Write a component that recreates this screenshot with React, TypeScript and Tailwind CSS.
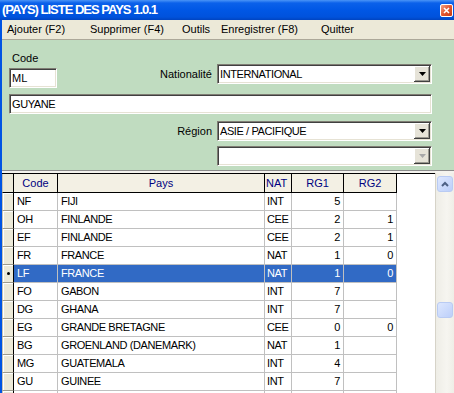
const rows: [string, string, string, string, string][] = [
  ["NF", "FIJI", "INT", "5", ""],
  ["OH", "FINLANDE", "CEE", "2", "1"],
  ["EF", "FINLANDE", "CEE", "2", "1"],
  ["FR", "FRANCE", "NAT", "1", "0"],
  ["LF", "FRANCE", "NAT", "1", "0"],
  ["FO", "GABON", "INT", "7", ""],
  ["DG", "GHANA", "INT", "7", ""],
  ["EG", "GRANDE BRETAGNE", "CEE", "0", "0"],
  ["BG", "GROENLAND (DANEMARK)", "NAT", "1", ""],
  ["MG", "GUATEMALA", "INT", "4", ""],
  ["GU", "GUINEE", "INT", "7", ""],
  ["", "", "", "", ""],
];

const SELECTED = 4;

const sunken =
  "h-[20px] bg-white border border-t-[#7f7d74] border-l-[#7f7d74] border-b-white border-r-white shadow-[inset_1px_1px_0_#404040,inset_-1px_-1px_0_#e6e2d4] flex items-center";

function Combo({ value, disabled }: { value: string; disabled?: boolean }) {
  return (
    <div className={`${sunken} w-[215px] pl-[2px]`}>
      <span className="tracking-[-0.4px]">{value}</span>
      <div className="ml-auto mr-[1px] w-[16px] h-[16px] bg-[#e6e3d8] shadow-[inset_-1px_-1px_0_#404040,inset_1px_1px_0_#ffffff,inset_-2px_-2px_0_#9a9890] flex items-center justify-center">
        <svg width="7" height="4" viewBox="0 0 7 4">
          <path d="M0 0H7L3.5 4Z" fill={disabled ? "#a8a8a8" : "#000"} />
        </svg>
      </div>
    </div>
  );
}

function ScrollButton({ arrow }: { arrow?: boolean }) {
  return (
    <div className="w-[16px] h-[16px] rounded-[3px] border border-[#b9cbf3] bg-[linear-gradient(to_bottom_right,#dde7fe,#bccffa)] flex items-center justify-center">
      {arrow && (
        <svg width="8" height="6" viewBox="0 0 8 6">
          <path d="M1 5L4 2L7 5" fill="none" stroke="#4d6185" strokeWidth="2" />
        </svg>
      )}
    </div>
  );
}

export default function App() {
  return (
    <div className="w-[454px] h-[393px] overflow-hidden flex flex-col bg-white font-['Liberation_Sans',Arial,sans-serif] text-[11px] text-black">
      {/* title bar */}
      <div className="h-[20px] shrink-0 flex items-center pl-[2px] pr-[1px] bg-[linear-gradient(to_bottom,#4a94f7_0%,#0b61ea_15%,#0057e5_50%,#0052dc_85%,#0044c0_100%)]">
        <span className="text-white font-bold text-[13px] tracking-[-1px]">(PAYS) LISTE DES PAYS 1.0.1</span>
        <div className="ml-auto w-[13px] h-[13px] rounded-[2px] border border-white bg-[linear-gradient(135deg,#f3a487,#e2552f_50%,#c63a14)] flex items-center justify-center">
          <svg width="7" height="7" viewBox="0 0 7 7">
            <path d="M1 1L6 6M6 1L1 6" stroke="#fff" strokeWidth="1.6" />
          </svg>
        </div>
      </div>

      <div className="flex-1 min-h-0 flex flex-col border-l-2 border-[#0054e3]">
        {/* menu */}
        <div className="h-[20px] shrink-0 flex items-center pl-[5px] bg-[#ece9d8] border-b border-[#aca899]">
          <span className="w-[83px]">Ajouter (F2)</span>
          <span className="w-[92px]">Supprimer (F4)</span>
          <span className="w-[39px]">Outils</span>
          <span className="w-[100px]">Enregistrer (F8)</span>
          <span>Quitter</span>
        </div>

        {/* form */}
        <div className="h-[131px] shrink-0 bg-[#c0dcc0] border-b border-[#8c8c8c] pl-[7px] pr-[22px] flex flex-col">
          <div className="flex items-start">
            <div className="flex flex-col mt-[11px]">
              <span className="leading-[14px] pl-[3px]">Code</span>
              <div className={`${sunken} w-[48px] mt-[3px] pl-[2px]`}>ML</div>
            </div>
            <div className="ml-auto mt-[24px] flex items-center">
              <span className="mr-[5px]">Nationalité</span>
              <Combo value="INTERNATIONAL" />
            </div>
          </div>
          <div className={`${sunken} mt-[6px] pl-[2px]`}>
            <span className="tracking-[-0.4px]">GUYANE</span>
          </div>
          <div className="mt-[7px] flex items-center justify-end">
            <span className="mr-[5px]">Région</span>
            <Combo value="ASIE / PACIFIQUE" />
          </div>
          <div className="mt-[5px] flex justify-end">
            <Combo value="" disabled />
          </div>
        </div>
        <div className="h-[2px] shrink-0 bg-[#f4f3ee]" />

        {/* grid */}
        <div className="flex-1 min-h-0 flex">
          <div className="w-[433px] border-t border-black overflow-hidden">
            <div className="flex h-[19px] text-[#000080]">
              <div className="w-[12px] bg-[#ece9d8] border-l border-l-[#c8c4b4] border-r border-r-black border-b border-b-black" />
              <div className="w-[44px] bg-[#f3f0e4] border-r border-b border-black flex items-center justify-center">Code</div>
              <div className="w-[207px] bg-[#f3f0e4] border-r border-b border-black flex items-center justify-center">Pays</div>
              <div className="w-[27px] bg-[#f3f0e4] border-r border-b border-black flex items-center pl-[1px]">NAT</div>
              <div className="w-[52px] bg-[#f3f0e4] border-r border-b border-black flex items-center justify-center">RG1</div>
              <div className="w-[53px] bg-[#f3f0e4] border-r border-b border-black flex items-center justify-center">RG2</div>
              <div className="flex-1" />
            </div>
            {rows.map((r, i) => {
              const sel = i === SELECTED;
              const cell = `h-[18px] border-r border-b border-[#c0c0c0] flex items-center ${sel ? "bg-[#316ac5] text-white" : ""}`;
              return (
                <div key={i} className="flex tracking-[-0.4px]">
                  <div className="w-[12px] h-[18px] bg-[#ece9d8] border-l border-l-[#c8c4b4] border-r border-r-black border-b border-b-[#9d9a8c] shadow-[inset_1px_1px_0_#ffffff] flex items-center justify-center">
                    {sel && <div className="w-[3px] h-[3px] rounded-full bg-black" />}
                  </div>
                  <div className={`${cell} w-[44px] pl-[3px]`}>{r[0]}</div>
                  <div className={`${cell} w-[207px] pl-[3px]`}>{r[1]}</div>
                  <div className={`${cell} w-[27px] pl-[2px]`}>{r[2]}</div>
                  <div className={`${cell} w-[52px] justify-end pr-[3px]`}>{r[3]}</div>
                  <div className={`${cell} w-[53px] justify-end pr-[3px]`}>{r[4]}</div>
                  <div className="flex-1" />
                </div>
              );
            })}
          </div>

          {/* scrollbar */}
          <div className="w-[19px] border-l border-[#d6d3c8] bg-[linear-gradient(to_right,#eeede6,#f6f5f0_60%,#efeee7)] pl-[1px] pt-[3px] flex flex-col">
            <ScrollButton arrow />
            <div className="mt-[110px]">
              <ScrollButton />
            </div>
          </div>
        </div>
      </div>
    </div>
  );
}
